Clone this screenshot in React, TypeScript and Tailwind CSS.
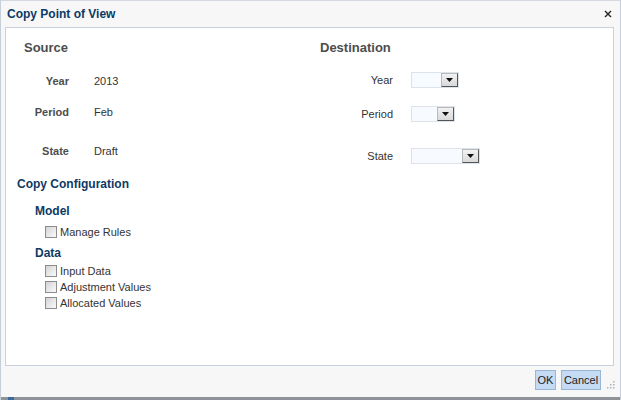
import React from "react";

const font = { fontFamily: '"Liberation Sans", Arial, sans-serif' };

function Select({ width }: { width: string }) {
    return (
        <div className={`flex h-[16px] ${width} items-stretch justify-end border border-[#dde3ea] bg-[#f7fbff]`}>
            <div className="flex w-[17px] items-center justify-center border border-t-[#b9b9b9] border-l-[#b9b9b9] border-r-[#555] border-b-[#555] bg-gradient-to-b from-[#f2f2f2] to-[#d9d9d9]">
                <svg width="7" height="4" viewBox="0 0 7 4">
                    <path d="M0 0h7L3.5 4z" fill="#111" />
                </svg>
            </div>
        </div>
    );
}

function Check({ label }: { label: string }) {
    return (
        <div className="flex h-[16px] items-center pl-[39px]">
            <span className="h-[12px] w-[12px] border border-[#8c8c8c] bg-gradient-to-br from-[#d4d4d4] to-[#fafafa]" />
            <span className="ml-[3px] text-[11px] text-[#333]">{label}</span>
        </div>
    );
}

function SourceRow({ label, value, className }: { label: string; value: string; className: string }) {
    return (
        <div className={`flex h-[16px] items-center ${className}`}>
            <span className="w-[45px] text-right text-[11px] font-bold text-[#4d4d4d]">{label}</span>
            <span className="ml-[25px] text-[11px] text-[#333]">{value}</span>
        </div>
    );
}

function DestRow({ label, width, className }: { label: string; width: string; className: string }) {
    return (
        <div className={`flex h-[16px] items-center ${className}`}>
            <span className="w-[73px] text-right text-[11px] text-[#333]">{label}</span>
            <div className="ml-[18px]">
                <Select width={width} />
            </div>
        </div>
    );
}

export default function App() {
    return (
        <div style={font} className="flex h-[400px] w-[621px] flex-col border-x border-[#c6ced9] bg-[#f7f7f7]">
            <div className="flex h-[27px] shrink-0 items-center justify-between border-t border-[#d4d9e0] pl-[6px] pr-[8px]">
                <span className="text-[12px] font-bold text-[#0b3a66]">Copy Point of View</span>
                <svg width="8" height="8" viewBox="0 0 8 8">
                    <path d="M1 1l6 6M7 1L1 7" stroke="#222" strokeWidth="1.4" />
                </svg>
            </div>

            <div className="ml-[4px] mr-[6px] flex h-[339px] shrink-0 flex-col border border-[#c8d1dd] bg-white pt-[12px]">
                <div className="flex">
                    <div className="w-[314px] pl-[18px]">
                        <div className="h-[16px] text-[13px] font-bold leading-[16px] text-[#4d4d4d]">Source</div>
                        <SourceRow label="Year" value="2013" className="mt-[17px]" />
                        <SourceRow label="Period" value="Feb" className="mt-[15px]" />
                        <SourceRow label="State" value="Draft" className="mt-[23px]" />
                    </div>
                    <div>
                        <div className="h-[16px] text-[13px] font-bold leading-[16px] text-[#4d4d4d]">Destination</div>
                        <DestRow label="Year" width="w-[48px]" className="mt-[16px]" />
                        <DestRow label="Period" width="w-[44px]" className="mt-[18px]" />
                        <DestRow label="State" width="w-[69px]" className="mt-[26px]" />
                    </div>
                </div>

                <div className="mt-[12px] h-[16px] pl-[11px] text-[12px] font-bold leading-[16px] text-[#0e3a64]">Copy Configuration</div>
                <div className="mt-[11px] h-[16px] pl-[29px] text-[12px] font-bold leading-[16px] text-[#0e3a64]">Model</div>
                <div className="mt-[5px]">
                    <Check label="Manage Rules" />
                </div>
                <div className="mt-[5px] h-[16px] pl-[29px] text-[12px] font-bold leading-[16px] text-[#0e3a64]">Data</div>
                <div className="mt-[2px] flex flex-col">
                    <Check label="Input Data" />
                    <Check label="Adjustment Values" />
                    <Check label="Allocated Values" />
                </div>
            </div>

            <div className="flex flex-1 items-start justify-end pr-[5px] pt-[4px]">
                <button className="h-[20px] w-[21px] border border-[#9ab6d6] bg-[#c5dbf4] text-[11px] text-[#222]">OK</button>
                <button className="ml-[5px] h-[20px] w-[40px] border border-[#9ab6d6] bg-[#c5dbf4] text-[11px] text-[#222]">Cancel</button>
                <svg className="mb-[6px] ml-[4px] self-end" width="10" height="10" viewBox="0 0 10 10">
                    <g fill="#a9b1bb">
                        <rect x="8" y="0" width="1.5" height="1.5" />
                        <rect x="5" y="3" width="1.5" height="1.5" />
                        <rect x="8" y="3" width="1.5" height="1.5" />
                        <rect x="2" y="6" width="1.5" height="1.5" />
                        <rect x="5" y="6" width="1.5" height="1.5" />
                        <rect x="8" y="6" width="1.5" height="1.5" />
                    </g>
                </svg>
            </div>
            <div className="flex h-[3px] shrink-0 bg-[#8e939a]">
                <span className="ml-[7px] w-[6px] bg-[#3d6a9e]" />
            </div>
        </div>
    );
}
